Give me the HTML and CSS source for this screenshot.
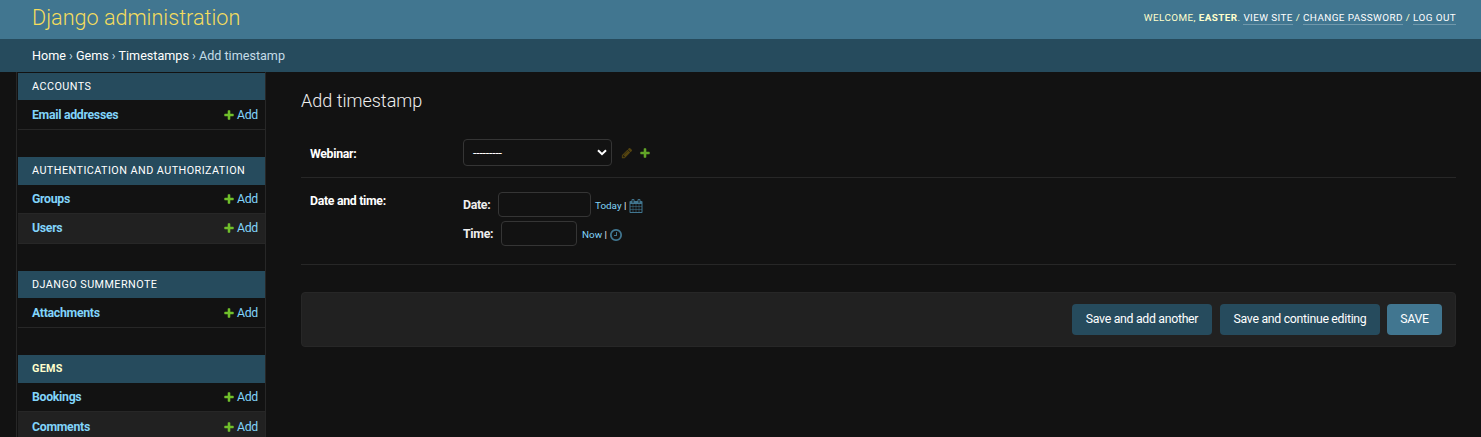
FILE: index.html
```html
<!DOCTYPE html>
<html lang="en">
<head>
<meta charset="utf-8">
<title>Add timestamp | Django administration</title>
<link rel="stylesheet" href="styles.css">
</head>
<body>
<svg class="defs" width="0" height="0">
  <symbol id="plus" viewBox="0 0 1792 1792"><path d="M1600 796v192q0 40-28 68t-68 28h-416v416q0 40-28 68t-68 28h-192q-40 0-68-28t-28-68v-416h-416q-40 0-68-28t-28-68v-192q0-40 28-68t68-28h416v-416q0-40 28-68t68-28h192q40 0 68 28t28 68v416h416q40 0 68 28t28 68z"/></symbol>
</svg>
<header class="header">
  <h1 class="brand">Django administration</h1>
  <div class="user-tools">Welcome, <strong>Easter</strong>. <a>View site</a> / <a>Change password</a> / <a>Log out</a></div>
</header>
<nav class="breadcrumbs"><a>Home</a> › <a>Gems</a> › <a>Timestamps</a> › Add timestamp</nav>
<div class="main">
  <aside class="sidebar">
    <section class="module">
      <h2 class="caption">Accounts</h2>
      <div class="row"><a class="model">Email addresses</a><a class="add"><svg class="plus"><use href="#plus"/></svg>Add</a></div>
    </section>
    <section class="module multi">
      <h2 class="caption">Authentication and Authorization</h2>
      <div class="row"><a class="model">Groups</a><a class="add"><svg class="plus"><use href="#plus"/></svg>Add</a></div>
      <div class="row"><a class="model">Users</a><a class="add"><svg class="plus"><use href="#plus"/></svg>Add</a></div>
    </section>
    <section class="module">
      <h2 class="caption">Django Summernote</h2>
      <div class="row"><a class="model">Attachments</a><a class="add"><svg class="plus"><use href="#plus"/></svg>Add</a></div>
    </section>
    <section class="module multi current">
      <h2 class="caption">Gems</h2>
      <div class="row"><a class="model">Bookings</a><a class="add"><svg class="plus"><use href="#plus"/></svg>Add</a></div>
      <div class="row"><a class="model">Comments</a><a class="add"><svg class="plus"><use href="#plus"/></svg>Add</a></div>
    </section>
  </aside>
  <main class="content">
    <h1 class="title">Add timestamp</h1>
    <div class="form-row webinar">
      <label class="label">Webinar:</label>
      <div class="select"><span class="dashes">---------</span><svg class="chevron" viewBox="0 0 10 7"><path d="M1 1.2l4 4 4-4"/></svg></div>
      <svg class="pencil" viewBox="0 0 1792 1792"><path d="M491 1536l91-91-235-235-91 91v107h128v128h107zm523-928q0-22-22-22-10 0-17 7l-542 542q-7 7-7 17 0 22 22 22 10 0 17-7l542-542q7-7 7-17zm-54-192l416 416-832 832h-416v-416zm683 96q0 53-37 90l-166 166-416-416 166-165q36-38 90-38 53 0 91 38l235 234q37 39 37 91z"/></svg>
      <svg class="plus"><use href="#plus"/></svg>
    </div>
    <div class="form-row datetime">
      <span class="label">Date and time:</span>
      <div class="fields">
        <div class="field"><label class="field-label">Date:</label><input class="date" type="text"><span class="shortcut"><a>Today</a> |</span><svg class="calendar" viewBox="0 0 1792 1792"><path d="M192 1664h288v-288h-288v288zm352 0h320v-288h-320v288zm-352-352h288v-320h-288v320zm352 0h320v-320h-320v320zm-352-384h288v-288h-288v288zm736 736h320v-288h-320v288zm-384-736h320v-288h-320v288zm768 736h288v-288h-288v288zm-384-352h320v-320h-320v320zm-352-864v-288q0-13-9.5-22.5t-22.5-9.5h-64q-13 0-22.5 9.5t-9.5 22.5v288q0 13 9.5 22.5t22.5 9.5h64q13 0 22.5-9.5t9.5-22.5zm736 864h288v-320h-288v320zm-384-384h320v-288h-320v288zm384 0h288v-288h-288v288zm32-480v-288q0-13-9.5-22.5t-22.5-9.5h-64q-13 0-22.5 9.5t-9.5 22.5v288q0 13 9.5 22.5t22.5 9.5h64q13 0 22.5-9.5t9.5-22.5zm384-64v1280q0 52-38 90t-90 38h-1408q-52 0-90-38t-38-90v-1280q0-52 38-90t90-38h128v-96q0-66 47-113t113-47h64q66 0 113 47t47 113v96h384v-96q0-66 47-113t113-47h64q66 0 113 47t47 113v96h128q52 0 90 38t38 90z"/></svg></div>
        <div class="field"><label class="field-label">Time:</label><input class="time" type="text"><span class="shortcut"><a>Now</a> |</span><svg class="clock" viewBox="0 0 1792 1792"><path d="M1024 544v448q0 14-9 23t-23 9h-320q-14 0-23-9t-9-23v-64q0-14 9-23t23-9h224v-352q0-14 9-23t23-9h64q14 0 23 9t9 23zm416 352q0-148-73-273t-198-198-273-73-273 73-198 198-73 273 73 273 198 198 273 73 273-73 198-198 73-273zm224 0q0 209-103 385.5t-279.5 279.5-385.5 103-385.5-103-279.5-279.5-103-385.5 103-385.5 279.5-279.5 385.5-103 385.5 103 279.5 279.5 103 385.5z"/></svg></div>
      </div>
    </div>
    <div class="submit-row">
      <button class="button another">Save and add another</button>
      <button class="button continue">Save and continue editing</button>
      <button class="button save">SAVE</button>
    </div>
  </main>
</div>
</body>
</html>
```
FILE: styles.css
```css
* { box-sizing: border-box; }
html, body { height: 100%; }
body {
  margin: 0;
  display: flex;
  flex-direction: column;
  overflow: hidden;
  background: #121212;
  color: #eee;
  font: 12.3px/16px Roboto, sans-serif;
  letter-spacing: -.3px;
}
.defs { display: none; }
.header {
  flex: none;
  height: 39px;
  padding: 0 25px 4px 32px;
  display: flex;
  justify-content: space-between;
  align-items: center;
  background: #417690;
  color: #ffc;
}
.brand { margin: 0; font-size: 21.6px; line-height: 26px; font-weight: 300; letter-spacing: 0; color: #f5dd5d; }
.user-tools { padding-top: 1px; font-size: 9.9px; letter-spacing: .41px; text-transform: uppercase; white-space: nowrap; line-height: 12px; }
.user-tools a { color: #fff; display: inline-block; border-bottom: 1px solid rgba(255,255,255,.25); }
.breadcrumbs {
  flex: none;
  height: 33px;
  padding-left: 32px;
  line-height: 33px;
  font-size: 12.6px;
  letter-spacing: 0;
  background: #264b5d;
  color: #c4dce8;
}
.breadcrumbs a { color: #fff; }
.main { flex: 1; min-height: 0; display: flex; }
.sidebar {
  flex: none;
  width: 250px;
  margin-left: 16px;
  padding: 1px 0 0 1px;
  border: solid #272727;
  border-width: 0 1px;
  overflow: hidden;
}
.module { margin-bottom: 27px; }
.caption {
  margin: 0;
  height: 27px;
  padding-left: 14px;
  line-height: 27px;
  background: #264b5d;
  color: #fff;
  font-size: 10.8px;
  font-weight: 400;
  letter-spacing: .45px;
  text-transform: uppercase;
}
.multi .caption { height: 28px; }
.current .caption { color: #ffc; font-weight: 700; letter-spacing: .3px; }
.row {
  height: 29px;
  padding: 0 7px 0 14px;
  display: flex;
  justify-content: space-between;
  align-items: center;
  border-bottom: 1px solid #272727;
  color: #81d4fa;
}
.row:last-child { height: 30px; }
.row:nth-child(3) { background: #212121; }
.multi .row:last-child { padding-bottom: 2px; }
.current .row:last-child { padding-bottom: 0; }
.model { font-weight: 700; }
.add { display: flex; align-items: center; gap: 2px; }
.plus { width: 12px; height: 12px; fill: #70bf2b; }
.content { flex: 1; padding: 18px 25px 0 35px; }
.title { margin: 0 0 17px; font-size: 18px; font-weight: 300; line-height: 22px; letter-spacing: 0; }
.form-row { display: flex; border-bottom: 1px solid #272727; padding-left: 9px; }
.label { width: 153px; font-weight: 700; color: #fff; }
.webinar { height: 49px; padding-bottom: 1px; align-items: center; }
.webinar .label { padding-top: 2px; }
.select {
  width: 149px;
  height: 27px;
  padding: 0 4px 0 9px;
  display: flex;
  align-items: center;
  justify-content: space-between;
  border: 1px solid #353535;
  border-radius: 4px;
  color: #fff;
}
.dashes { letter-spacing: -.2px; }
.chevron { width: 10px; height: 7px; fill: none; stroke: #fff; stroke-width: 2; }
.pencil { width: 12px; height: 12px; margin: 0 6px 0 9px; fill: #efb80b; opacity: .3; }
.webinar .plus { opacity: .85; }
.datetime { height: 87px; padding-top: 14px; }
.datetime .label { padding-top: 1px; }
.fields { display: flex; flex-direction: column; gap: 4px; }
.field { height: 25px; display: flex; align-items: center; }
.field-label { width: 28px; font-weight: 700; white-space: nowrap; }
.field:last-child .field-label { width: 31px; }
.field input {
  height: 25px;
  padding: 0;
  background: #121212;
  border: 1px solid #353535;
  border-radius: 4px;
}
.date { width: 93px; margin: 0 4px 0 7px; }
.time { width: 76px; margin: 0 5px 0 7px; }
.shortcut { font-size: 9.9px; letter-spacing: 0; padding-top: 2px; white-space: nowrap; }
.shortcut a { color: #81d4fa; }
.calendar, .clock { width: 14px; height: 14px; margin: 3px 0 0 2px; fill: #417690; }
.calendar { margin-left: 3px; }
.submit-row {
  height: 55px;
  margin-top: 27px;
  padding: 0 13px;
  display: flex;
  align-items: center;
  justify-content: flex-end;
  background: #212121;
  border: 1px solid #272727;
  border-radius: 4px;
}
.button {
  height: 31px;
  padding: 0 0 1px;
  border: 0;
  border-radius: 4px;
  background: #264b5d;
  color: #fff;
  font: 12.3px Roboto, sans-serif;
  letter-spacing: -.3px;
}
.another { width: 140px; margin-right: 8px; }
.continue { width: 160px; margin-right: 7px; }
.save { width: 55px; background: #417690; }
```
